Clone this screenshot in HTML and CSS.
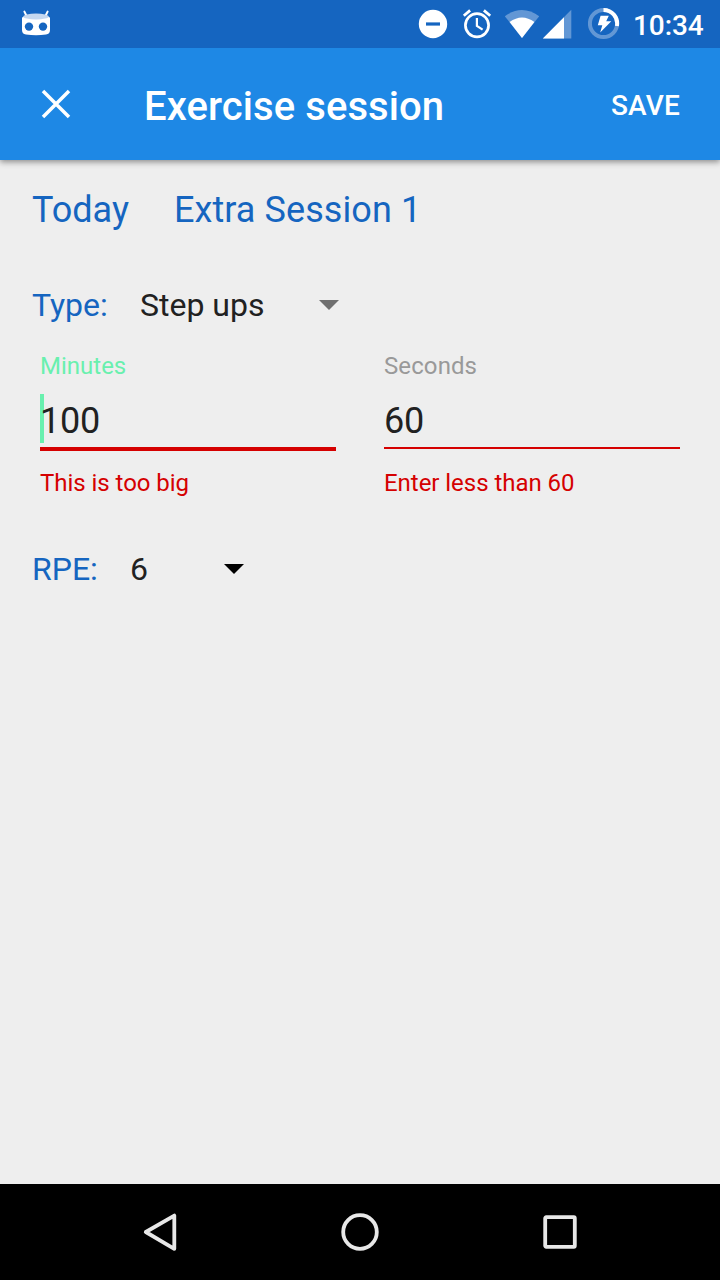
FILE: index.html
```html
<!DOCTYPE html>
<html lang="en">
<head>
<meta charset="utf-8">
<title>Exercise session</title>
<link rel="stylesheet" href="styles.css">
</head>
<body>
<div class="screen">
  <div class="status-bar">
    <svg class="status-cid" width="28" height="26" viewBox="0 0 28 26">
      <path d="M2.4 1.6 4.6 6M25.6 1.6 23.4 6" stroke="#fff" stroke-width="2" stroke-linecap="round"/>
      <path d="M0 7.5Q14 1 28 7.5V20Q28 24 24 24.5Q14 26 4 24.5Q0 24 0 20Z" fill="#fff"/>
      <ellipse cx="14" cy="6.5" rx="12.8" ry="3" fill="#c5d8f0"/>
      <circle cx="7" cy="16.6" r="4.2" fill="#1565c0"/><circle cx="21" cy="16.6" r="4.2" fill="#1565c0"/>
    </svg>
    <div class="status-icons">
      <svg width="30" height="48" viewBox="418 0 30 48">
        <circle cx="433" cy="24" r="14.2" fill="#fff"/><path d="M426 24H440" stroke="#1565c0" stroke-width="3.2"/>
      </svg>
      <svg class="alarm" width="30" height="48" viewBox="462 0 30 48" fill="none" stroke="#fff">
        <circle cx="477" cy="25.3" r="11.6" stroke-width="2.7"/>
        <path d="M476.9 18V25.8L482.6 29.6" stroke-width="2.2"/>
        <path d="M463.8 15.7 470.1 10.4M483.9 10.4 490.2 15.7" stroke-width="2.8"/>
      </svg>
      <svg class="wifi" width="36" height="48" viewBox="504 0 36 48">
        <path d="M504.8 16.3Q522 3.7 539.2 16.3L522 38Z" fill="#fff" opacity=".33"/>
        <path d="M509.6 22Q522 13 534.4 22L522 38Z" fill="#fff"/>
      </svg>
      <svg class="signal" width="30" height="48" viewBox="542 0 30 48">
        <path d="M571.3 9.7V38.6H542.8Z" fill="#fff" opacity=".33"/>
        <path d="M564 17.2V38.6H542.8Z" fill="#fff"/>
      </svg>
      <svg class="battery" width="32" height="48" viewBox="588 0 32 48">
        <g fill="none" stroke="#fff" stroke-width="4"><circle cx="603.5" cy="23.5" r="13.6" opacity=".33"/><path d="M603.5 9.9A13.6 13.6 0 0 1 616.9 26"/></g>
        <path d="M600.6 15.7H608.8L606.2 21.2H611.3L600.2 32.4L602.3 25.3H597.8Z" fill="#fff"/>
      </svg>
      <span class="clock">10:34</span>
    </div>
  </div>
  <header class="app-bar">
    <svg class="close" width="32" height="32" viewBox="0 0 32 32"><path d="M3 3 29 29M29 3 3 29" stroke="#fff" stroke-width="3.5"/></svg>
    <h1 class="title">Exercise session</h1>
    <span class="save">SAVE</span>
  </header>
  <main class="form">
    <div class="session"><span class="day">Today</span><span class="extra">Extra Session 1</span></div>
    <div class="row type">
      <span class="name">Type:</span><span class="choice">Step ups</span>
      <svg width="20" height="10" viewBox="0 0 20 10"><path d="M0 0H20L10 10Z" fill="#6f6f6f"/></svg>
    </div>
    <div class="fields">
      <div class="field focused">
        <span class="label">Minutes</span><span class="value">100</span><span class="error">This is too big</span>
      </div>
      <div class="field">
        <span class="label seconds">Seconds</span><span class="value">60</span><span class="error">Enter less than 60</span>
      </div>
    </div>
    <div class="row rpe">
      <span class="name">RPE:</span><span class="choice">6</span>
      <svg width="20" height="10" viewBox="0 0 20 10"><path d="M0 0H20L10 10Z" fill="#000"/></svg>
    </div>
  </main>
  <nav class="nav-bar">
    <svg width="40" height="40" viewBox="0 0 40 40"><path d="M34.3 3.6V36.8L5.8 20Z"/></svg>
    <svg width="40" height="40" viewBox="0 0 40 40"><circle cx="20" cy="20" r="16.8"/></svg>
    <svg width="40" height="40" viewBox="0 0 40 40"><rect x="5.2" y="5.2" width="29.6" height="29.6" rx="1"/></svg>
  </nav>
</div>
</body>
</html>
```
FILE: styles.css
```css
* { box-sizing: border-box; }
body { margin: 0; font-family: Roboto, "Liberation Sans", sans-serif; }
svg { display: block; flex: none; }
.screen { display: flex; flex-direction: column; width: 720px; height: 1280px; overflow: hidden; background: #eee; }
.status-bar { position: relative; z-index: 1; display: flex; justify-content: space-between; height: 48px; flex: none; padding: 0 16px 0 22px; background: #1565c0; color: #fff; }
.status-cid { margin-top: 10px; }
.status-icons { display: flex; }
.alarm { margin-left: 14px; }
.wifi { margin-left: 12px; }
.signal { margin-left: 2px; }
.battery { margin-left: 16px; }
.clock { width: 71px; margin-left: 13px; font-size: 28px; font-weight: 500; line-height: 52px; letter-spacing: -0.1px; white-space: nowrap; }
.app-bar { display: flex; align-items: center; height: 112px; flex: none; padding: 0 40px; background: #1e88e5; color: #fff; box-shadow: 0 2px 6px rgba(0, 0, 0, .42); }
.title { flex: 1; margin: 0 0 0 72px; padding-top: 6px; font-size: 40px; font-weight: 500; line-height: 48px; letter-spacing: .08px; }
.save { padding-top: 3px; font-size: 28px; font-weight: 500; line-height: 36px; letter-spacing: .2px; }
.form { flex: 1; padding: 26px 32px 0; }
.session { display: flex; gap: 45px; font-size: 36px; line-height: 48px; color: #1565c0; }
.extra { letter-spacing: .08px; }
.row { display: flex; align-items: center; font-size: 32px; line-height: 48px; color: #212121; }
.name { color: #1565c0; }
.type { margin-top: 47px; }
.type .name, .rpe .name { flex: none; }
.type .name { width: 108px; }
.type .choice { width: 179px; }
.rpe { margin-top: 48px; }
.rpe .name { width: 98px; }
.rpe .choice { width: 94px; }
.fields { display: grid; grid-template-columns: 1fr 1fr; gap: 48px; margin: 23px 8px 0; }
.field { display: flex; flex-direction: column; height: 145px; }
.label { font-size: 24px; line-height: 28px; color: #999; }
.seconds { letter-spacing: .1px; }
.value { position: relative; height: 55px; margin-top: 14px; border-bottom: 2px solid #d50000; font-size: 36px; line-height: 54px; letter-spacing: -.2px; color: #212121; }
.error { margin-top: 20px; font-size: 24px; line-height: 28px; letter-spacing: -.04px; color: #d50000; }
.focused .label { color: #69f0ae; }
.focused .value { height: 57px; border-bottom-width: 4px; z-index: 0; }
.focused .value::before { content: ""; position: absolute; z-index: -1; left: 0; top: 0; width: 4px; height: 49px; background: #69f0ae; }
.focused .error { margin-top: 18px; }
.nav-bar { display: flex; justify-content: center; align-items: center; gap: 160px; height: 96px; flex: none; background: #000; }
.nav-bar svg { fill: none; stroke: #e8e8e8; stroke-width: 3.8; stroke-linejoin: round; }
```
